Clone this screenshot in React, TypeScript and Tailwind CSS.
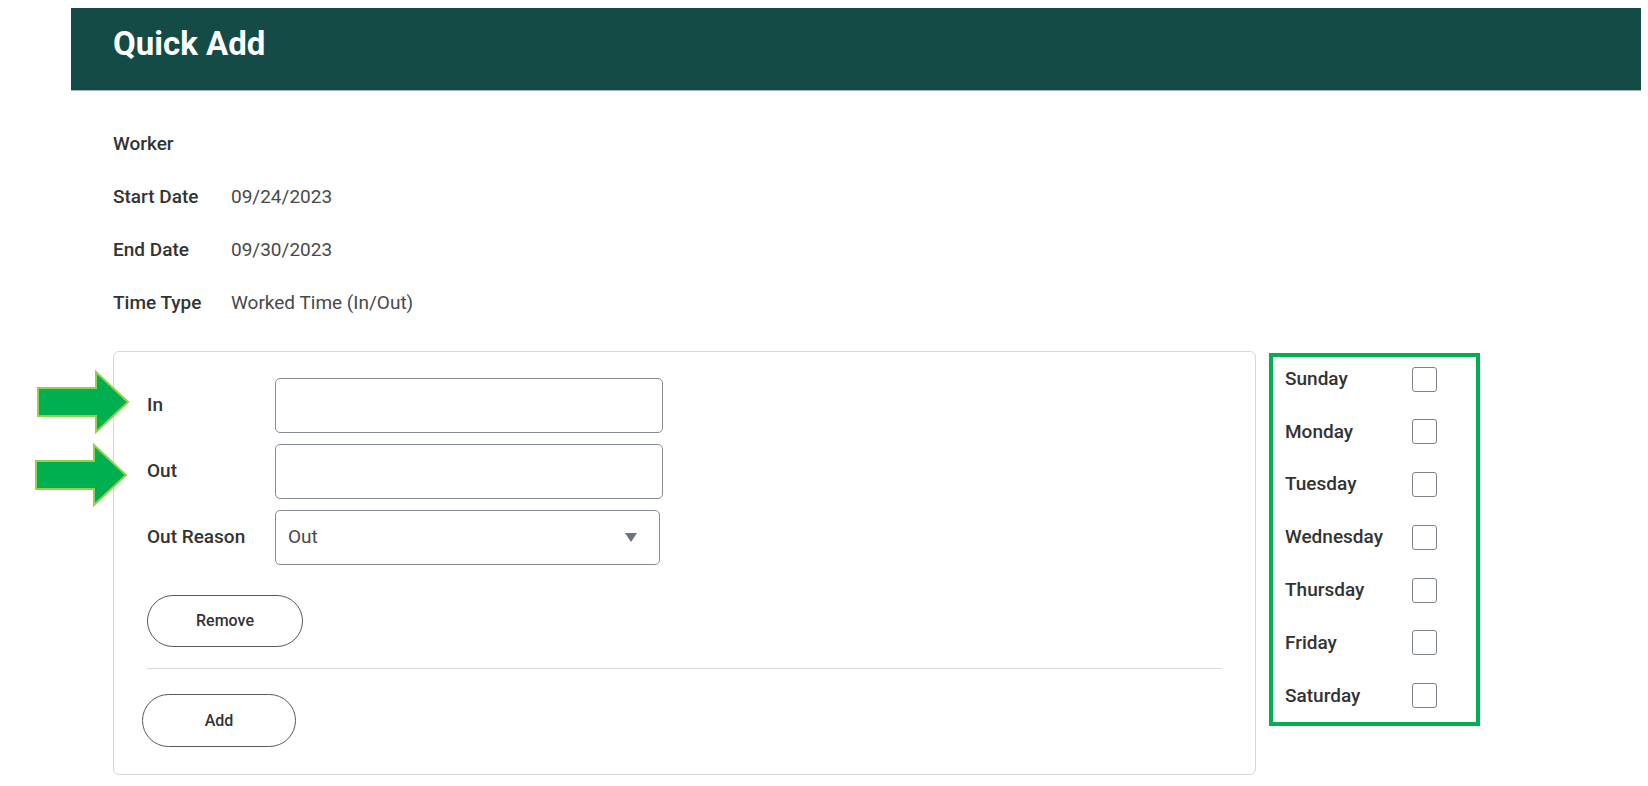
import React from "react";

const font = { fontFamily: "Roboto, 'Liberation Sans', sans-serif" };

function Arrow({ className }: { className: string }) {
  return (
    <svg className={className} viewBox="0 0 94 64" width="94" height="64">
      <polygon
        points="2,18 60,18 60,2 92,32 60,62 60,46 2,46"
        fill="#00b050"
        stroke="#92d050"
        strokeWidth="2"
        strokeLinejoin="miter"
      />
    </svg>
  );
}

function InfoRow({ label, value }: { label: string; value?: string }) {
  return (
    <div className="flex h-[53px] items-center">
      <div className="w-[118px] text-[19px] font-medium text-[#333333]">{label}</div>
      {value && <div className="text-[19px] text-[#494949]">{value}</div>}
    </div>
  );
}

const days = ["Sunday", "Monday", "Tuesday", "Wednesday", "Thursday", "Friday", "Saturday"];

export default function App() {
  return (
    <div className="relative h-[786px] w-[1648px] overflow-hidden bg-white" style={font}>
      <div className="ml-[71px] mt-[8px] h-[83px] w-[1570px] border-b border-[#9fb7b6] bg-[#144b46] pl-[42px] pt-[19px]">
        <h1 className="text-[33px] font-bold leading-none text-white">Quick Add</h1>
      </div>

      <div className="pl-[113px] pt-[27px]">
        <InfoRow label="Worker" />
        <InfoRow label="Start Date" value="09/24/2023" />
        <InfoRow label="End Date" value="09/30/2023" />
        <InfoRow label="Time Type" value="Worked Time (In/Out)" />

        <div className="mt-[21px] flex items-start gap-[13px]">
          <div className="h-[424px] w-[1143px] rounded-[6px] border border-[#d3d6dc] pl-[33px] pr-[33px] pt-[26px]">
            <div className="flex flex-col gap-[11px]">
              <div className="flex items-center">
                <div className="w-[128px] text-[19px] font-medium text-[#333333]">In</div>
                <div className="h-[55px] w-[388px] rounded-[5px] border border-[#868c94]" />
              </div>
              <div className="flex items-center">
                <div className="w-[128px] text-[19px] font-medium text-[#333333]">Out</div>
                <div className="h-[55px] w-[388px] rounded-[5px] border border-[#868c94]" />
              </div>
              <div className="flex items-center">
                <div className="w-[128px] text-[19px] font-medium text-[#333333]">Out Reason</div>
                <div className="flex h-[55px] w-[385px] items-center justify-between rounded-[5px] border border-[#868c94] pl-[12px] pr-[22px]">
                  <span className="text-[19px] text-[#494949]">Out</span>
                  <svg width="12" height="9" viewBox="0 0 12 9">
                    <polygon points="0,0 12,0 6,9" fill="#6b7480" />
                  </svg>
                </div>
              </div>
            </div>

            <button className="mt-[30px] h-[52px] w-[156px] rounded-full border border-[#5a5a5a] text-[16px] font-medium text-[#333333]">
              Remove
            </button>

            <div className="mt-[21px] h-px w-[1075px] bg-[#d5d8dd]" />

            <button className="ml-[-5px] mt-[25px] h-[53px] w-[154px] rounded-full border border-[#5a5a5a] text-[16px] font-medium text-[#333333]">
              Add
            </button>
          </div>

          <div className="mt-[2px] flex w-[211px] flex-col gap-[12.8px] border-4 border-[#00b050] pb-[6px] pl-[12px] pt-[2px]">
            {days.map((d) => (
              <div key={d} className="flex h-[40px] items-center">
                <div className="w-[127px] text-[19px] font-medium text-[#333333]">{d}</div>
                <div className="h-[25px] w-[25px] rounded-[3px] border-[1.5px] border-[#7d838b] bg-white" />
              </div>
            ))}
          </div>
        </div>
      </div>

      <Arrow className="absolute left-[36px] top-[370px]" />
      <Arrow className="absolute left-[34px] top-[443px]" />
    </div>
  );
}
